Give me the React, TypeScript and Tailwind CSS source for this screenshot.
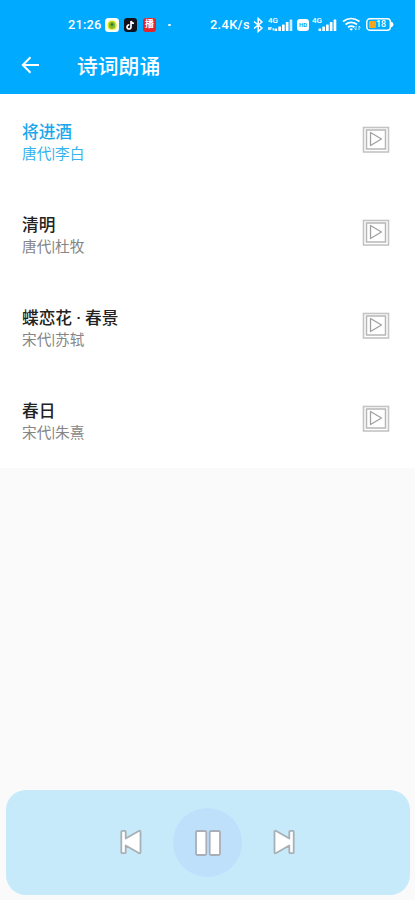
import React from "react";

const poems = [
  { title: "将进酒", author: "唐代|李白", active: true },
  { title: "清明", author: "唐代|杜牧", active: false },
  { title: "蝶恋花 · 春景", author: "宋代|苏轼", active: false },
  { title: "春日", author: "宋代|朱熹", active: false },
];

function Signal({ data }: { data: boolean }) {
  return (
    <div className="relative h-[14px] w-[25px] shrink-0">
      <span className="absolute left-0 -top-[1px] text-[8px] leading-[8px] font-medium">4G</span>
      <svg className="absolute inset-0" width="25" height="14" viewBox="0 0 25 14" fill="white">
        {data && <path d="M0 9h4l-1 3H0zM4.500 10h1.500v2.500H4.500z" opacity=".75" />}
        <rect x="6.500" y="10.500" width="2.700" height="2.500" rx=".5" />
        <rect x="10.300" y="8.500" width="2.700" height="4.500" rx=".5" />
        <rect x="14" y="6.500" width="2.700" height="6.500" rx=".5" />
        <rect x="17.800" y="4" width="2.700" height="9" rx=".5" />
        <rect x="21.600" y="1.500" width="2.700" height="11.500" rx=".5" opacity={data ? 0.8 : 1} />
      </svg>
    </div>
  );
}

function StatusBar() {
  return (
    <div className="flex h-[48px] items-center pl-[68px] pt-px text-white">
      <span className="w-[34px] shrink-0 whitespace-nowrap pt-px text-[12.800px] font-medium tracking-[0.2px]">21:26</span>
      <svg className="ml-[3px] shrink-0" width="14" height="14" viewBox="0 0 14 14">
        <rect width="14" height="14" rx="3.500" fill="#fbfff5" />
        <path d="M2.500 6.500Q3 2.500 7 2.500t4.500 4-2 5h-5q-2-1-2-5" fill="#dce51c" />
        <path d="M4 5.500Q7 1.500 10 5.500V9Q7 13 4 9" fill="#82b72a" />
        <circle cx="7" cy="6.500" r="1.300" fill="#25763d" />
      </svg>
      <svg className="ml-[5px] shrink-0" width="13" height="14" viewBox="0 0 13 14">
        <rect width="13" height="14" rx="3" fill="#10131d" />
        <path d="M7 3v5.800A2 2 0 1 1 5.300 7M7 3q.5 2.200 3 2.500" fill="none" stroke="#fff" strokeWidth="1.700" />
      </svg>
      <div className="ml-[6px] flex h-[14px] w-[13px] shrink-0 items-center justify-center rounded-[3px] bg-[#e5242b] text-[9px] leading-none font-bold">播</div>
      <span className="ml-[12px] h-[2px] w-[3px] shrink-0 rounded-full bg-white/90" />
      <span className="ml-[39px] w-[42px] shrink-0 whitespace-nowrap pt-px text-[12.800px] font-medium tracking-[0.35px]">2.4K/s</span>
      <svg className="ml-px shrink-0" width="11" height="16" viewBox="0 0 11 16" fill="none" stroke="white" strokeWidth="1.500">
        <path d="m1 4.500 8 6.500-3.800 3.500v-13L9 5 1 11.500" />
      </svg>
      <div className="ml-[4px]"><Signal data /></div>
      <div className="ml-[4px] flex h-[12px] w-[12px] shrink-0 items-center justify-center rounded-[3px] bg-white text-[6px] leading-none font-bold text-[#00aaff]">HD</div>
      <div className="ml-[3px]"><Signal data={false} /></div>
      <svg className="ml-[5px] shrink-0" width="20" height="15" viewBox="0 0 20 15" fill="none" stroke="white" strokeWidth="1.700">
        <path d="M1 4.500Q9 -1.500 17.500 4.500M3.500 7.500Q9 3.200 15 7.500M6 10.300q3-2.500 6.500 0" />
        <path d="m7.500 12 1.700 1.700L11 12q-1.700-1.500-3.500 0" fill="white" stroke="none" />
        <path d="M14 9v4m-1.500-1.500L14 13m3 0V9m0 0 1.500 1.500" strokeWidth="1" opacity=".7" />
      </svg>
      <div className="relative ml-[4px] h-[13px] w-[28px] shrink-0">
        <svg width="28" height="13" viewBox="0 0 28 13" fill="none">
          <rect x=".8" y=".8" width="23.500" height="11.400" rx="3" stroke="white" strokeWidth="1.400" />
          <path d="M25 3.500q2.500 1 2.500 3t-2.500 3" fill="white" />
          <rect x="3" y="3" width="7" height="7" rx="1" fill="#f4a51e" />
        </svg>
        <span className="absolute left-[10px] top-[2px] text-[9px] leading-[9px] font-medium">18</span>
      </div>
    </div>
  );
}

function PlayIcon() {
  return (
    <svg className="mb-[2px]" width="28" height="28" viewBox="0 0 28 28" fill="none">
      <rect x="1.500" y="1.500" width="25" height="24.500" stroke="#c4c4c4" strokeWidth="1.600" />
      <rect x="4.500" y="4" width="19" height="19" stroke="#b7b7b7" strokeWidth="1.500" />
      <path d="M8.500 6.500v13l11-6.500z" stroke="#a0a0a0" strokeWidth="1.300" strokeLinejoin="round" />
    </svg>
  );
}

function SkipIcon({ flip = false }: { flip?: boolean }) {
  return (
    <svg className={flip ? "-scale-x-100" : ""} width="22" height="26" viewBox="0 0 22 26">
      <path d="M2.300 1.800h2.400q1 0 1 1v6.700L18.800 2q1.700-.8 1.700 1v20q0 1.800-1.700 1L5.700 16.500v6.700q0 1-1 1H2.300q-1 0-1-1V2.800q0-1 1-1z" fill="white" stroke="#a6b0b6" strokeWidth="1.800" strokeLinejoin="round" />
    </svg>
  );
}

export default function App() {
  return (
    <div className="flex h-[900px] w-[415px] flex-col overflow-hidden bg-[#fafafa] font-[Roboto,'Noto_Sans_CJK_SC',sans-serif]">
      <header className="h-[94px] shrink-0 bg-[#00aaff] text-white">
        <StatusBar />
        <div className="flex h-[35px] items-center pl-[21px]">
          <svg className="mb-px" width="19" height="18" viewBox="0 0 19 18" fill="none" stroke="white" strokeWidth="2">
            <path d="M18 9H2M9.500 1.300 1.800 9l7.700 7.700" />
          </svg>
          <h1 className="ml-[37px] pt-[2px] text-[20.800px] leading-[30px] font-medium">诗词朗诵</h1>
        </div>
      </header>
      <main className="shrink-0 bg-white pb-[2px]">
        {poems.map((poem) => (
          <div key={poem.title} className={`flex h-[93px] items-center justify-between pl-[22px] pr-[25px] ${poem.active ? "text-[#18a7eb]" : "text-[#222]"}`}>
            <div className="pt-[5px]">
              <h2 className="text-[16.700px] leading-[22px] font-medium">{poem.title}</h2>
              <p className={`text-[14.700px] leading-[21px] ${poem.active ? "text-[#36b2ec]" : "text-[#858585]"}`}>{poem.author}</p>
            </div>
            <PlayIcon />
          </div>
        ))}
      </main>
      <div className="mt-auto mb-[5px] ml-[6px] flex h-[105px] w-[404px] shrink-0 items-center justify-center gap-[31px] rounded-[20px] bg-[#c7eafb] pr-[2px] pb-px">
        <SkipIcon />
        <div className="flex h-[69px] w-[69px] items-center justify-center rounded-full bg-[#bee0fb]">
          <svg className="ml-[2px] mt-px" width="28" height="28" viewBox="0 0 28 28" fill="white" stroke="#a9afb8" strokeWidth="1.800">
            <rect x="2" y="2" width="10.300" height="24" rx="1.200" />
            <rect x="15.700" y="2" width="10.300" height="24" rx="1.200" />
          </svg>
        </div>
        <SkipIcon flip />
      </div>
    </div>
  );
}
